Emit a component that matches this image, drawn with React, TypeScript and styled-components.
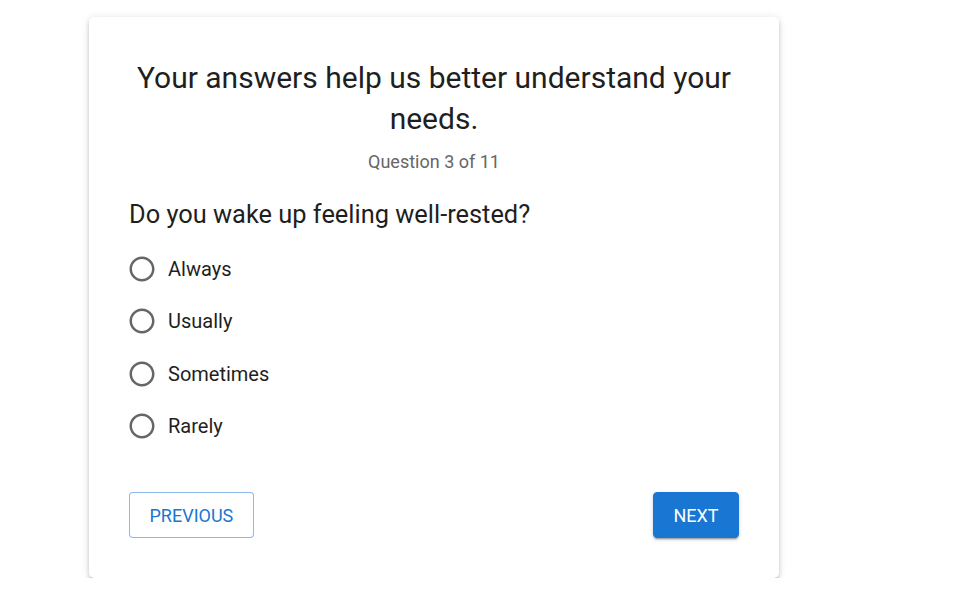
import React, { useState } from 'react';
import styled, { createGlobalStyle } from 'styled-components';

const GlobalStyle = createGlobalStyle`
    body {
        margin: 0;
        background: #ffffff;
        font-family: Roboto, "Helvetica Neue", Arial, sans-serif;
        color: rgba(0, 0, 0, 0.87);
    }
`;

const Page = styled.div`
    padding: 17px 0 0 89px;
`;

const Card = styled.div`
    width: 690px;
    box-sizing: border-box;
    padding: 40px;
    background: #fff;
    border-radius: 5px;
    box-shadow: 0px 3px 3px -2px rgba(0, 0, 0, 0.2), 0px 3px 4px 0px rgba(0, 0, 0, 0.14),
        0px 1px 8px 0px rgba(0, 0, 0, 0.12);
`;

const Title = styled.h2`
    margin: 0;
    font-size: 30px;
    font-weight: 400;
    line-height: 41px;
    text-align: center;
    color: #1f1f1f;
`;

const Progress = styled.div`
    margin-top: 11px;
    font-size: 18px;
    line-height: 24px;
    text-align: center;
    color: #666;
`;

const Question = styled.h3`
    margin: 24px 0 13px 0;
    font-size: 25.4px;
    font-weight: 400;
    line-height: 32px;
    color: #1f1f1f;
`;

const Options = styled.div`
    display: flex;
    flex-direction: column;
`;

const Option = styled.label`
    display: flex;
    align-items: center;
    gap: 11.5px;
    height: 52.3px;
    font-size: 20px;
    color: #1f1f1f;
    cursor: pointer;
`;

const HiddenInput = styled.input`
    position: absolute;
    opacity: 0;
    pointer-events: none;
`;

const RadioIcon = styled.svg<{ $checked: boolean }>`
    width: 30px;
    height: 30px;
    margin-left: -2.5px;
    color: ${props => (props.$checked ? '#1976d2' : '#666')};
`;

const Actions = styled.div`
    display: flex;
    justify-content: space-between;
    margin-top: 40px;
`;

const Button = styled.button<{ $primary?: boolean }>`
    height: 46px;
    padding: 0 19.5px;
    font-family: Roboto, Arial, sans-serif;
    font-size: 18px;
    font-weight: 400;
    text-transform: uppercase;
    border-radius: 4px;
    cursor: pointer;
    border: 1px solid ${props => (props.$primary ? '#1976d2' : 'rgba(25, 118, 210, 0.5)')};
    background: ${props => (props.$primary ? '#1976d2' : '#fff')};
    color: ${props => (props.$primary ? '#fff' : '#1976d2')};
    box-shadow: ${props =>
        props.$primary
            ? '0px 3px 1px -2px rgba(0,0,0,0.2), 0px 2px 2px 0px rgba(0,0,0,0.14), 0px 1px 5px 0px rgba(0,0,0,0.12)'
            : 'none'};
`;

const options = ['Always', 'Usually', 'Sometimes', 'Rarely'];

const Radio: React.FC<{ checked: boolean }> = ({ checked }) => (
    <RadioIcon $checked={checked} viewBox="0 0 24 24" fill="currentColor">
        <path d="M12 2C6.48 2 2 6.48 2 12s4.48 10 10 10 10-4.48 10-10S17.52 2 12 2zm0 18c-4.42 0-8-3.58-8-8s3.58-8 8-8 8 3.58 8 8-3.58 8-8 8z" />
        {checked && <circle cx="12" cy="12" r="5" />}
    </RadioIcon>
);

const App: React.FC = () => {
    const [answer, setAnswer] = useState('');

    return (
        <Page>
            <GlobalStyle />
            <Card>
                <Title>Your answers help us better understand your needs.</Title>
                <Progress>Question 3 of 11</Progress>
                <Question>Do you wake up feeling well-rested?</Question>
                <Options>
                    {options.map(option => (
                        <Option key={option}>
                            <HiddenInput
                                type="radio"
                                name="rested"
                                value={option}
                                checked={answer === option}
                                onChange={() => setAnswer(option)}
                            />
                            <Radio checked={answer === option} />
                            {option}
                        </Option>
                    ))}
                </Options>
                <Actions>
                    <Button>Previous</Button>
                    <Button $primary>Next</Button>
                </Actions>
            </Card>
        </Page>
    );
};

export default App;
